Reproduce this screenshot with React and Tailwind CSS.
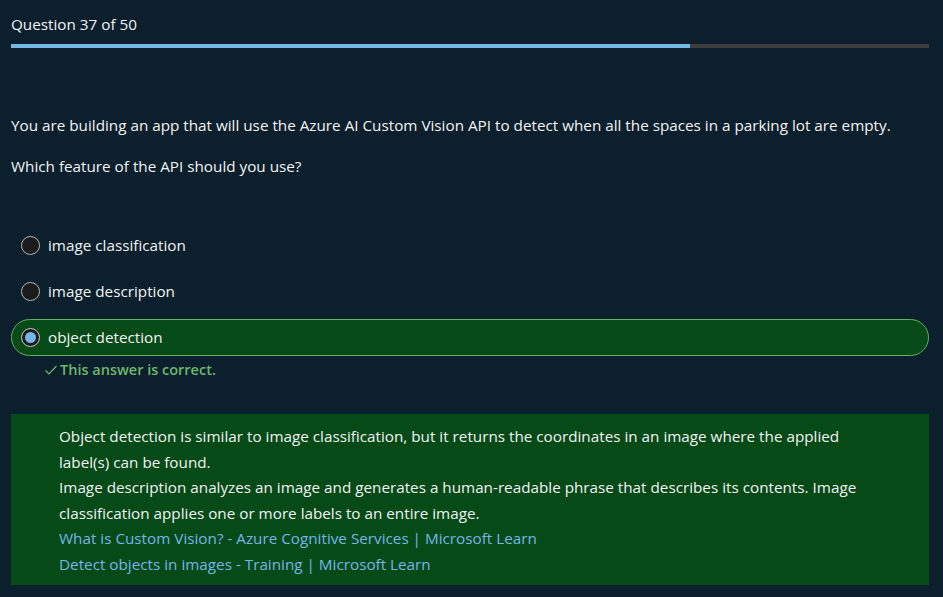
import React from 'react'

const options = [
  { label: 'image classification', selected: false },
  { label: 'image description', selected: false },
  { label: 'object detection', selected: true },
]

const Radio = ({ selected }) =>
  selected ? (
    <span className="flex h-[19px] w-[19px] shrink-0 items-center justify-center rounded-full border border-[#c8c8c8] bg-[#1b1b1b]">
      <span className="h-[11px] w-[11px] rounded-full bg-[#75b6e7]"></span>
    </span>
  ) : (
    <span className="h-[19px] w-[19px] shrink-0 rounded-full border border-[#b5b5b5] bg-[#1b1b1b]"></span>
  )

const App = () => {
  const current = 37
  const total = 50

  return (
    <div className="min-h-[597px] bg-[#0b1f2d] px-[11px] pt-[14px] text-[15.25px] text-[#f2f2f2]" style={{ fontFamily: '"Open Sans", "Noto Sans", sans-serif' }}>
      <div className="leading-[20px]">Question {current} of {total}</div>

      {/* Progress */}
      <div className="mt-[10px] h-[4px] w-[918px] bg-[#3e3e3e]">
        <div className="h-full bg-[#75b6e7]" style={{ width: `${(current / total) * 100}%` }}></div>
      </div>

      <p className="mt-[66px] leading-[22px]">
        You are building an app that will use the Azure AI Custom Vision API to detect when all the spaces in a parking lot are empty.
      </p>
      <p className="mt-[19px] leading-[22px]">Which feature of the API should you use?</p>

      <div className="mt-[50px] flex flex-col gap-[9px]">
        {options.map((opt) => (
          <div
            key={opt.label}
            className={`flex h-[37px] w-[918px] items-center gap-[8px] rounded-full border pl-[9px] ${
              opt.selected ? 'border-[#66ad66] bg-[#054a17]' : 'border-transparent'
            }`}
          >
            <Radio selected={opt.selected} />
            <span>{opt.label}</span>
          </div>
        ))}
      </div>

      <div className="mt-[4px] flex items-center gap-[2px] pl-[33px] text-[14.5px] font-semibold leading-[20px] text-[#6cb86c]">
        <svg width="14" height="14" viewBox="0 0 14 14" fill="none" stroke="#6cb86c" strokeWidth="1.2">
          <path d="M1.5 7.5 L5 11 L12.5 3" />
        </svg>
        <span>This answer is correct.</span>
      </div>

      <div className="mt-[34px] w-[918px] bg-[#064a18] pb-[8px] pl-[48px] pr-[52px] pt-[10px] leading-[25.5px]">
        <p>
          Object detection is similar to image classification, but it returns the coordinates in an image where the applied label(s) can be found.
        </p>
        <p>
          Image description analyzes an image and generates a human-readable phrase that describes its contents. Image classification applies one or more labels to an entire image.
        </p>
        <a className="block text-[#75b6e7]" href="#">What is Custom Vision? - Azure Cognitive Services | Microsoft Learn</a>
        <a className="block text-[#75b6e7]" href="#">Detect objects in images - Training | Microsoft Learn</a>
      </div>
    </div>
  )
}

export default App
